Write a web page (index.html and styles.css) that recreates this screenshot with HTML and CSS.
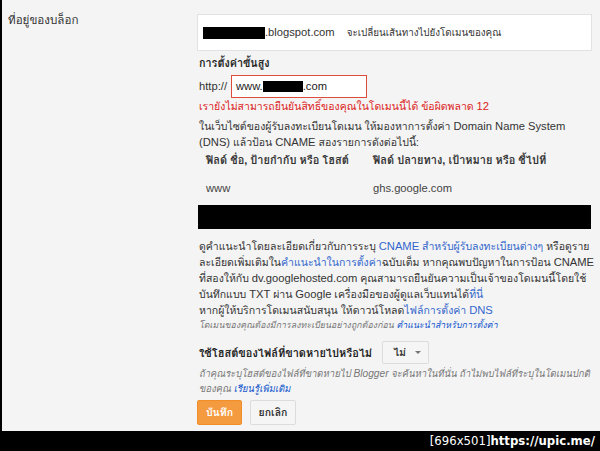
FILE: index.html
```html
<!DOCTYPE html>
<html lang="th">
<head>
<meta charset="utf-8">
<title>ที่อยู่ของบล็อก</title>
<link rel="stylesheet" href="styles.css">
</head>
<body>
<div class="page">
  <div class="main">
    <div class="label">ที่อยู่ของบล็อก</div>
    <div class="content">
      <div class="urlbox"><span class="redact r1"></span><span class="en">.blogspot.com</span><span class="redir">จะเปลี่ยนเส้นทางไปยังโดเมนของคุณ</span></div>
      <div class="heading">การตั้งค่าขั้นสูง</div>
      <div class="httprow"><span class="http en">http://</span><div class="input"><span class="en">www.</span><span class="redact r2"></span><span class="en">.com</span></div></div>
      <div class="error">เรายังไม่สามารถยืนยันสิทธิ์ของคุณในโดเมนนี้ได้ ข้อผิดพลาด <span class="en">12</span></div>
      <p class="p1">ในเว็บไซต์ของผู้รับลงทะเบียนโดเมน ให้มองหาการตั้งค่า <span class="en">Domain Name System</span><br><span class="en">(DNS)</span> แล้วป้อน <span class="en">CNAME</span> สองรายการดังต่อไปนี้:</p>
      <div class="table">
        <div class="th c1">ฟิลด์ ชื่อ, ป้ายกำกับ หรือ โฮสต์</div>
        <div class="th c2">ฟิลด์ ปลายทาง, เป้าหมาย หรือ ชี้ไปที่</div>
        <div class="td c1"><span class="en">www</span></div>
        <div class="td c2"><span class="en">ghs.google.com</span></div>
      </div>
      <div class="redact r3"></div>
      <p class="p2">ดูคำแนะนำโดยละเอียดเกี่ยวกับการระบุ <a href="#"><span class="en">CNAME</span> สำหรับผู้รับลงทะเบียนต่างๆ</a> หรือดูราย<br>ละเอียดเพิ่มเติมใน<a href="#">คำแนะนำในการตั้งค่า</a>ฉบับเต็ม หากคุณพบปัญหาในการป้อน <span class="en">CNAME</span><br>ที่สองให้กับ <span class="en">dv.googlehosted.com</span> คุณสามารถยืนยันความเป็นเจ้าของโดเมนนี้โดยใช้<br>บันทึกแบบ <span class="en">TXT</span> ผ่าน <span class="en">Google</span> เครื่องมือของผู้ดูแลเว็บแทนได้<a href="#">ที่นี่</a><br>หากผู้ให้บริการโดเมนสนับสนุน ให้ดาวน์โหลด<a href="#">ไฟล์การตั้งค่า <span class="en">DNS</span></a></p>
      <p class="note note1">โดเมนของคุณต้องมีการลงทะเบียนอย่างถูกต้องก่อน <a href="#">คำแนะนำสำหรับการตั้งค่า</a></p>
      <div class="hostrow"><span class="hostlabel">ใช้โฮสต์ของไฟล์ที่ขาดหายไปหรือไม่</span><span class="select">ไม่<span class="caret"></span></span></div>
      <p class="note note2">ถ้าคุณระบุโฮสต์ของไฟล์ที่ขาดหายไป <span class="en">Blogger</span> จะค้นหาในที่นั่น ถ้าไม่พบไฟล์ที่ระบุในโดเมนปกติ<br>ของคุณ <a href="#">เรียนรู้เพิ่มเติม</a></p>
      <div class="buttons"><span class="btn save">บันทึก</span><span class="btn cancel">ยกเลิก</span></div>
    </div>
  </div>
  <div class="footer"><span class="dim">[696x501]</span><span class="site">https://upic.me/</span></div>
</div>
</body>
</html>
```
FILE: styles.css
```css
html, body { margin: 0; padding: 0; }
body {
  font-family: "Liberation Sans", "Loma", Arial, sans-serif;
  font-size: 10.5px;
  color: #222;
  background: #000;
}
.en { font-size: 11.2px; line-height: 1; }
.page {
  width: 598px;
  height: 451px;
  border-left: 2px solid #000;
  display: flex;
  flex-direction: column;
}
.main {
  height: 431px;
  background: #f4f4f4;
  display: flex;
  white-space: nowrap;
  overflow: hidden;
}
.label {
  width: 189px;
  padding: 12px 0 0 6px;
  line-height: 16px;
  font-size: 11.6px;
  color: #333;
}
.content {
  width: 395px;
  padding-top: 14px;
}
.urlbox {
  height: 35px;
  background: #fff;
  border: 1px solid #e2e2e2;
  display: flex;
  align-items: center;
  padding-left: 5px;
  color: #333;
}
.redact { background: #000; display: inline-block; }
.r1 { width: 62px; height: 12px; }
.r2 { width: 40px; height: 11px; }
.r3 { display: block; height: 24px; margin: 9px 1px 0 1px; }
.redir { margin-left: 12px; font-size: 9.8px; }
.heading {
  font-weight: bold;
  margin: 4px 0 0 2px;
  line-height: 16px;
  font-size: 10.8px;
  color: #222;
}
.httprow {
  display: flex;
  align-items: center;
  margin: 4px 0 0 2px;
}
.http { color: #333; margin-right: 4px; }
.input {
  width: 130px;
  height: 21px;
  border: 1px solid #dd4b39;
  background: #fff;
  display: flex;
  align-items: center;
  padding-left: 4px;
  color: #222;
}
.error {
  color: #dd2222;
  margin: 0 0 0 2px;
  line-height: 16px;
}
.p1 {
  margin: 5px 0 0 2px;
  line-height: 15.5px;
  color: #333;
}
.table {
  display: grid;
  grid-template-columns: 167px 1fr;
  margin: 2px 0 0 9px;
  line-height: 16px;
}
.th { font-weight: bold; color: #333; padding-bottom: 12px; font-size: 11px; }
.td { color: #444; }
.p2 {
  margin: 9px 0 0 2px;
  line-height: 16px;
  color: #333;
}
a { color: #3366cc; text-decoration: none; }
.note {
  font-style: italic;
  color: #777;
  margin: 0 0 0 2px;
  line-height: 14px;
}
.note .en { font-size: 10.2px; }
.note1 { font-size: 8.9px; }
.note a { color: #1155cc; }
.hostrow {
  display: flex;
  align-items: center;
  margin: 9px 0 0 2px;
}
.hostlabel { font-weight: bold; color: #222; margin-right: 10px; font-size: 11px; }
.select {
  display: inline-flex;
  align-items: center;
  height: 21px;
  padding: 0 7px 0 10px;
  border: 1px solid #dcdcdc;
  border-radius: 2px;
  background: #f5f5f5;
  font-weight: bold;
  color: #333;
}
.caret {
  width: 0; height: 0;
  border-left: 3.5px solid transparent;
  border-right: 3.5px solid transparent;
  border-top: 3.5px solid #777;
  margin-left: 9px;
}
.note2 { margin-top: 2px; font-size: 9.5px; line-height: 15px; }
.buttons {
  display: flex;
  gap: 8px;
  margin: 4px 0 0 0;
}
.btn {
  display: inline-flex;
  align-items: center;
  justify-content: center;
  height: 25px;
  width: 45px;
  border-radius: 2px;
  font-weight: bold;
  box-sizing: border-box;
}
.save {
  background: #f59b3f;
  border: 1px solid #f28e2a;
  color: #fff;
}
.cancel {
  background: #f5f5f5;
  border: 1px solid #dcdcdc;
  color: #333;
  width: 46px;
}
.footer {
  height: 20px;
  background: #000;
  color: #fff;
  text-align: right;
  padding-right: 5px;
  line-height: 20px;
}
.dim { font-family: "DejaVu Sans Condensed", "DejaVu Sans", sans-serif; font-size: 13px; }
.site { font-family: "DejaVu Sans Condensed", "DejaVu Sans", sans-serif; font-weight: bold; font-size: 13px; }
```
